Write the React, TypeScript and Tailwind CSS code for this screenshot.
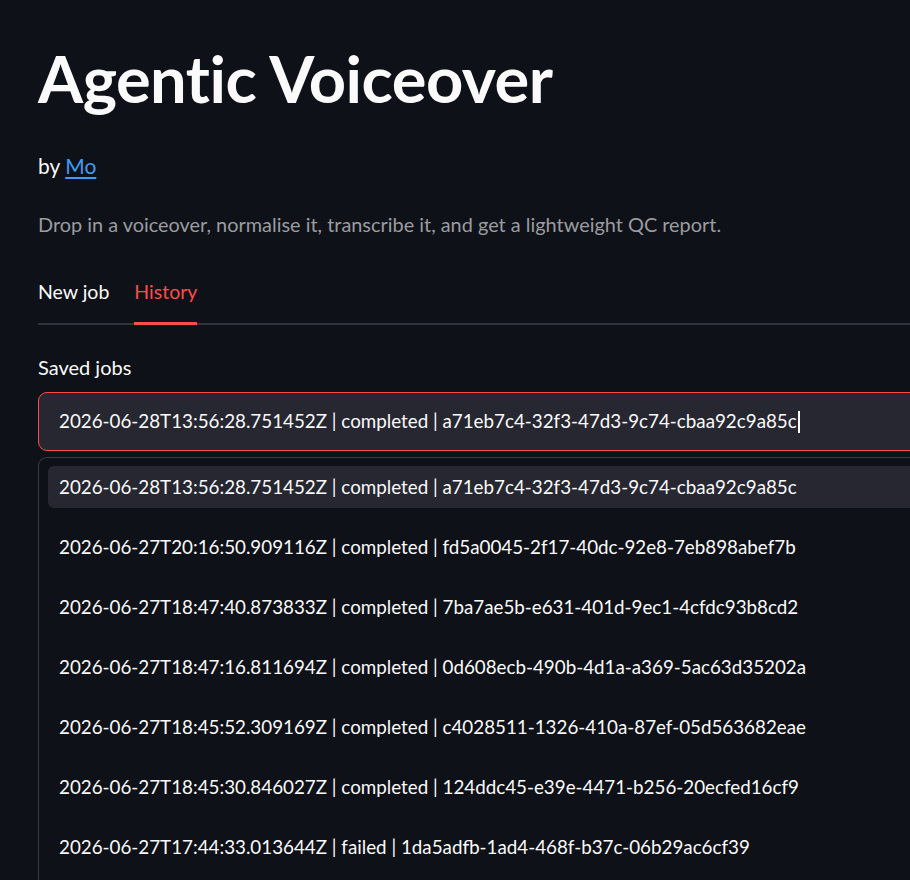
import React from 'react';

const jobs = [
    '2026-06-28T13:56:28.751452Z | completed | a71eb7c4-32f3-47d3-9c74-cbaa92c9a85c',
    '2026-06-27T20:16:50.909116Z | completed | fd5a0045-2f17-40dc-92e8-7eb898abef7b',
    '2026-06-27T18:47:40.873833Z | completed | 7ba7ae5b-e631-401d-9ec1-4cfdc93b8cd2',
    '2026-06-27T18:47:16.811694Z | completed | 0d608ecb-490b-4d1a-a369-5ac63d35202a',
    '2026-06-27T18:45:52.309169Z | completed | c4028511-1326-410a-87ef-05d563682eae',
    '2026-06-27T18:45:30.846027Z | completed | 124ddc45-e39e-4471-b256-20ecfed16cf9',
    '2026-06-27T17:44:33.013644Z | failed | 1da5adfb-1ad4-468f-b37c-06b29ac6cf39',
];

const App: React.FC = () => {
    return (
        <div
            className="w-[910px] h-[880px] overflow-hidden bg-[#0e1117] text-[#fafafa]"
            style={{ fontFamily: 'Lato, "Noto Sans", sans-serif' }}
        >
            <div className="w-[1000px] pl-[38px] pt-[38px]">
                {/* Title */}
                <h1 className="text-[65px] font-bold leading-[80px] tracking-[-0.5px]">Agentic Voiceover</h1>

                <p className="mt-[34px] text-[21px] leading-[28px]">
                    by{' '}
                    <a href="#" className="text-[#3d9df3] underline underline-offset-[3px]">
                        Mo
                    </a>
                </p>

                <p className="mt-[32px] text-[19.9px] leading-[24px] text-[#9b9ca0]">
                    Drop in a voiceover, normalise it, transcribe it, and get a lightweight QC report.
                </p>

                {/* Tabs */}
                <div className="mt-[44px] flex gap-[25px] border-b-2 border-[#31333f] text-[19.5px]">
                    <button className="pb-[19px] leading-[24px] text-[#fafafa]">New job</button>
                    <button className="relative pb-[19px] leading-[24px] text-[#ff4b4b]">
                        History
                        <span className="absolute left-0 right-0 -bottom-[2px] h-[3px] bg-[#ff4b4b]" />
                    </button>
                </div>

                {/* Saved jobs */}
                <div className="mt-[30px] text-[20px] leading-[24px]">Saved jobs</div>

                <div className="mt-[13px] flex h-[59px] items-center rounded-[9px] border border-[#ff4b4b] bg-[#262730] pl-[20px] text-[18.8px]">
                    <span>{jobs[0]}</span>
                    <span className="ml-[1px] h-[22px] w-[2px] bg-[#fafafa]" />
                </div>

                <div className="mt-[6px] h-[500px] rounded-tl-[9px] border-l border-t border-[#3a3b44] px-[9px] pt-[8px]">
                    <div className="flex flex-col gap-[18px] text-[18.8px]">
                        {jobs.map((job, i) => (
                            <div
                                key={job}
                                className={`flex h-[42px] items-center rounded-[6px] pl-[11px] ${
                                    i === 0 ? 'bg-[#262730]' : ''
                                }`}
                            >
                                {job}
                            </div>
                        ))}
                    </div>
                </div>
            </div>
        </div>
    );
};

export default App;
